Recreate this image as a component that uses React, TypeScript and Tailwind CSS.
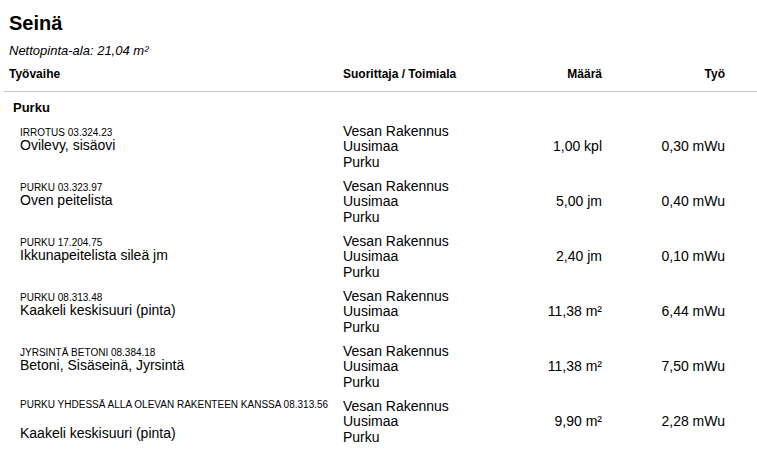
import React from 'react';

interface Row {
  code: string;
  name: string;
  contractor: string[];
  qty: string;
  work: string;
}

const ROWS: Row[] = [
  { code: 'IRROTUS 03.324.23', name: 'Ovilevy, sisäovi', contractor: ['Vesan Rakennus', 'Uusimaa', 'Purku'], qty: '1,00 kpl', work: '0,30 mWu' },
  { code: 'PURKU 03.323.97', name: 'Oven peitelista', contractor: ['Vesan Rakennus', 'Uusimaa', 'Purku'], qty: '5,00 jm', work: '0,40 mWu' },
  { code: 'PURKU 17.204.75', name: 'Ikkunapeitelista sileä jm', contractor: ['Vesan Rakennus', 'Uusimaa', 'Purku'], qty: '2,40 jm', work: '0,10 mWu' },
  { code: 'PURKU 08.313.48', name: 'Kaakeli keskisuuri (pinta)', contractor: ['Vesan Rakennus', 'Uusimaa', 'Purku'], qty: '11,38 m²', work: '6,44 mWu' },
  { code: 'JYRSINTÄ BETONI 08.384.18', name: 'Betoni, Sisäseinä, Jyrsintä', contractor: ['Vesan Rakennus', 'Uusimaa', 'Purku'], qty: '11,38 m²', work: '7,50 mWu' },
  { code: 'PURKU YHDESSÄ ALLA OLEVAN RAKENTEEN KANSSA 08.313.56', name: 'Kaakeli keskisuuri (pinta)', contractor: ['Vesan Rakennus', 'Uusimaa', 'Purku'], qty: '9,90 m²', work: '2,28 mWu' },
];

const COLS = 'grid grid-cols-[339px_150px_109px_123px]';

const App: React.FC = () => {
  return (
    <div className="w-[757px] h-[454px] overflow-hidden bg-white text-black pl-[4px] font-['Liberation_Sans',Arial,sans-serif]">
      {/* Title */}
      <h1 className="pl-[5px] pt-[12px] text-[20px] leading-[23px] font-bold">Seinä</h1>
      <p className="pl-[5px] mt-[8px] text-[13px] leading-[15px] italic">Nettopinta-ala: 21,04 m²</p>

      {/* Header */}
      <div className={`${COLS} mt-[9px] pb-[10px] border-b border-[#c8c8c8] text-[12px] leading-[14px] font-bold`}>
        <span className="pl-[5px]">Työvaihe</span>
        <span>Suorittaja / Toimiala</span>
        <span className="text-right">Määrä</span>
        <span className="text-right">Työ</span>
      </div>

      {/* Section */}
      <h2 className="pl-[9px] mt-[7.5px] text-[13px] leading-[15px] font-bold">Purku</h2>

      <div className="mt-[9px]">
        {ROWS.map((row, i) => {
          const last = i === ROWS.length - 1;
          return (
            <div
              key={i}
              className={`${COLS} text-[14px] leading-[15.5px] ${i === 0 ? '' : 'mt-[8.5px]'}`}
            >
              <div className="pl-[16px] flex flex-col">
                <span className={`text-[10px] leading-[12px] whitespace-nowrap ${last ? 'mt-0' : 'mt-[3px]'}`}>
                  {row.code}
                </span>
                <span className={`leading-[12px] ${last ? 'mt-[16.5px]' : ''}`}>{row.name}</span>
              </div>
              <div className="flex flex-col">
                {row.contractor.map((c) => (
                  <span key={c}>{c}</span>
                ))}
              </div>
              <div className="self-center text-right">{row.qty}</div>
              <div className="self-center text-right">{row.work}</div>
            </div>
          );
        })}
      </div>
    </div>
  );
};

export default App;
